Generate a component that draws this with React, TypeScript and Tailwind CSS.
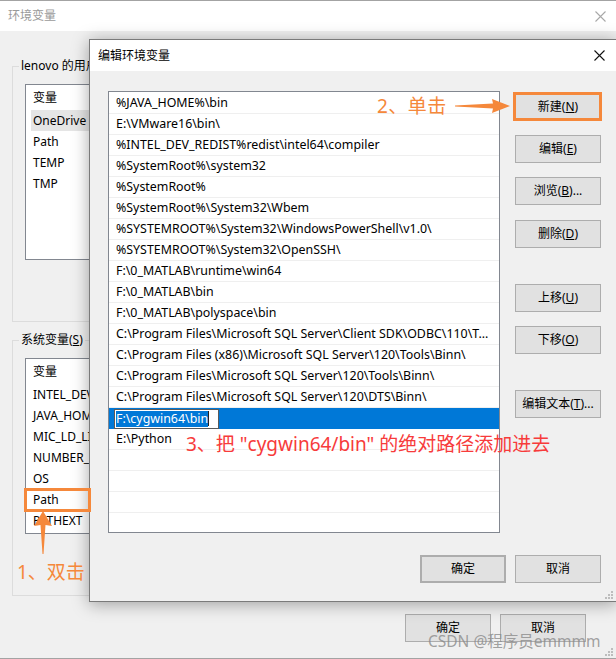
import type { ReactNode } from "react";

const paths = [
  "%JAVA_HOME%\\bin",
  "E:\\VMware16\\bin\\",
  "%INTEL_DEV_REDIST%redist\\intel64\\compiler",
  "%SystemRoot%\\system32",
  "%SystemRoot%",
  "%SystemRoot%\\System32\\Wbem",
  "%SYSTEMROOT%\\System32\\WindowsPowerShell\\v1.0\\",
  "%SYSTEMROOT%\\System32\\OpenSSH\\",
  "F:\\0_MATLAB\\runtime\\win64",
  "F:\\0_MATLAB\\bin",
  "F:\\0_MATLAB\\polyspace\\bin",
  "C:\\Program Files\\Microsoft SQL Server\\Client SDK\\ODBC\\110\\T...",
  "C:\\Program Files (x86)\\Microsoft SQL Server\\120\\Tools\\Binn\\",
  "C:\\Program Files\\Microsoft SQL Server\\120\\Tools\\Binn\\",
  "C:\\Program Files\\Microsoft SQL Server\\120\\DTS\\Binn\\",
];

const userVars = ["OneDrive", "Path", "TEMP", "TMP"];
const sysVars = ["INTEL_DEV_REDIST", "JAVA_HOME", "MIC_LD_LIBRARY_PATH", "NUMBER_OF_PROCESSORS", "OS", "Path", "PATHEXT"];

function Btn({ children, className = "" }: { children: ReactNode; className?: string }) {
  return (
    <div className={`w-[86px] h-[28px] flex items-center justify-center bg-[#e1e1e1] border border-[#adadad] text-[12px] text-black ${className}`}>
      {children}
    </div>
  );
}

function CloseX({ color }: { color: string }) {
  return (
    <svg width="11" height="11" viewBox="0 0 11 11">
      <path d="M0.5 0.5 L10.5 10.5 M10.5 0.5 L0.5 10.5" stroke={color} strokeWidth="1.1" />
    </svg>
  );
}

function Grip() {
  return (
    <svg width="8" height="8" viewBox="0 0 8 8">
      {[[6, 0], [3, 3], [6, 3], [0, 6], [3, 6], [6, 6]].map(([x, y]) => (
        <rect key={`${x}-${y}`} x={x} y={y} width="2" height="2" fill="#bdbdbd" />
      ))}
    </svg>
  );
}

function VarList({ items, selected }: { items: string[]; selected?: number }) {
  return (
    <div className="mt-[9px] ml-[12px] w-[560px] h-[176px] border border-[#828790] bg-white">
      <div className="h-[25px] flex items-center pl-[7px]">变量</div>
      {items.map((v, i) => (
        <div key={v} className={`h-[21px] flex items-center ml-[5px] pl-[2px] ${i === selected ? "bg-[#e5e5e5]" : ""}`}>
          {v}
        </div>
      ))}
    </div>
  );
}

export default function App() {
  return (
    <div className="relative w-[616px] h-[659px] overflow-hidden bg-[#f0f0f0] text-[12px] text-black font-['Noto_Sans','Noto_Sans_CJK_SC',sans-serif]">
      {/* outer window */}
      <div className="flex flex-col h-full border-t border-b border-[#a3a3a3]">
        <div className="h-[30px] bg-white flex items-center justify-between pl-[8px] pr-[10px] text-[#9a9a9a]">
          <span>环境变量</span>
          <CloseX color="#a8a8a8" />
        </div>
        <div className="flex-1 flex flex-col">
          <fieldset className="mt-[26px] ml-[12px] w-[580px] h-[265px] border border-[#dcdcdc]">
            <legend className="ml-[6px] px-[2px] leading-[18px]">lenovo 的用户变量(<u>U</u>)</legend>
            <VarList items={userVars} selected={0} />
          </fieldset>
          <fieldset className="mt-[9px] ml-[12px] w-[580px] h-[265px] border border-[#dcdcdc]">
            <legend className="ml-[6px] px-[2px] leading-[18px]">系统变量(<u>S</u>)</legend>
            <VarList items={sysVars} />
          </fieldset>
          <div className="mt-[18px] flex justify-end gap-[9px] pr-[30px]">
            <Btn>确定</Btn>
            <Btn>取消</Btn>
          </div>
        </div>
      </div>
      <div className="absolute right-[3px] bottom-[3px]">
        <Grip />
      </div>

      {/* edit dialog */}
      <div className="absolute left-[89px] top-[39px] w-[528px] h-[563px] border border-[#7a7a7a] bg-[#f0f0f0] shadow-[0_2px_16px_rgba(0,0,0,0.35)] flex flex-col">
        <div className="h-[31px] bg-white flex items-center justify-between pl-[8px] pr-[11px]">
          <span>编辑环境变量</span>
          <CloseX color="#111" />
        </div>
        <div className="flex items-start pl-[18px] pt-[20px]">
          <div className="w-[392px] h-[442px] pt-[1px] border border-[#828790] bg-white overflow-hidden text-[12.4px]">
            {paths.map(p => (
              <div key={p} className="h-[21px] border-b border-[#efefef] pl-[7px] pr-[4px] leading-[20px] whitespace-nowrap overflow-hidden">
                {p}
              </div>
            ))}
            <div className="h-[21px] bg-[#0078d7] pl-[5px] flex items-center">
              <div className="w-[105px] h-[20px] border border-[#5a5a5a] bg-white flex items-center pl-[1px]">
                <span className="bg-[#0078d7] text-white leading-[16px]">F:\cygwin64\bin</span>
                <span className="w-[1px] h-[15px] bg-[#222]" />
              </div>
            </div>
            <div className="h-[21px] border-b border-[#efefef] pl-[7px] leading-[20px]">E:\Python</div>
            {[0, 1, 2, 3].map(i => (
              <div key={i} className="h-[21px] border-b border-[#efefef]" />
            ))}
          </div>
          <div className="ml-[15px] mt-[2px] flex flex-col">
            <Btn>新建(<u>N</u>)</Btn>
            <Btn className="mt-[14px]">编辑(<u>E</u>)</Btn>
            <Btn className="mt-[14px]">浏览(<u>B</u>)...</Btn>
            <Btn className="mt-[15px]">删除(<u>D</u>)</Btn>
            <Btn className="mt-[36px]">上移(<u>U</u>)</Btn>
            <Btn className="mt-[14px]">下移(<u>O</u>)</Btn>
            <Btn className="mt-[36px]">编辑文本(<u>T</u>)...</Btn>
          </div>
        </div>
        <div className="mt-[22px] flex justify-end gap-[9px] pr-[15px]">
          <Btn className="border-2 border-[#0078d7]">确定</Btn>
          <Btn>取消</Btn>
        </div>
        <div className="absolute right-[3px] bottom-[2px]">
          <Grip />
        </div>
      </div>

      {/* annotations */}
      <div className="absolute left-[513px] top-[92px] w-[89px] h-[29px] border-[3px] border-[#f5883b]" />
      <div className="absolute left-[377px] top-[94px] text-[19px] tracking-[0.5px] leading-[24px] text-[#f5883b] whitespace-nowrap">2、单击</div>
      <svg className="absolute left-[455px] top-[97px]" width="56" height="18" viewBox="0 0 56 18">
        <polygon points="0,8.5 38,6.5 37,2 55,9 37,16 38,11.5 0,9.5" fill="#f5883b" />
      </svg>

      <div className="absolute left-[24px] top-[488px] w-[67px] h-[24px] border-[3px] border-[#f5883b]" />
      <svg className="absolute left-[33px] top-[511px]" width="20" height="44" viewBox="0 0 20 44">
        <polygon points="10,0 19,15 12.5,14 10.5,43 9.5,43 7.5,14 1,15" fill="#f5883b" />
      </svg>
      <div className="absolute left-[17px] top-[560px] text-[19px] leading-[24px] text-[#f5883b] whitespace-nowrap">1、双击</div>

      <div className="absolute left-[186px] top-[432px] text-[19px] leading-[24px] text-[#f73b3b] whitespace-nowrap">
        3、把 "cygwin64/bin" 的绝对路径添加进去
      </div>

      <div className="absolute left-[428px] top-[630px] text-[15.5px] leading-[22px] text-[#8a8a8a]/80 whitespace-nowrap">
        CSDN @程序员emmmm
      </div>
    </div>
  );
}
